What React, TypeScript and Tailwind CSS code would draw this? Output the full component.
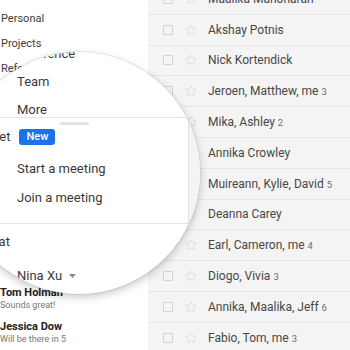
import React from 'react';
import { Star } from 'lucide-react';

interface Thread {
  names: string;
  count?: number;
}

const threads: Thread[] = [
  { names: 'Maalika Manoharan' },
  { names: 'Akshay Potnis' },
  { names: 'Nick Kortendick' },
  { names: 'Jeroen, Matthew, me', count: 3 },
  { names: 'Mika, Ashley', count: 2 },
  { names: 'Annika Crowley' },
  { names: 'Muireann, Kylie, David', count: 5 },
  { names: 'Deanna Carey' },
  { names: 'Earl, Cameron, me', count: 4 },
  { names: 'Diogo, Vivia', count: 3 },
  { names: 'Annika, Maalika, Jeff', count: 6 },
  { names: 'Fabio, Tom, me', count: 3 },
];

const chats = [
  { name: 'Tom Holman', preview: 'Sounds great!' },
  { name: 'Jessica Dow', preview: 'Will be there in 5' },
];

const ThreadRow: React.FC<{ thread: Thread }> = ({ thread }) => (
  <div className="h-[30.8px] flex items-center pl-[15px] border-b border-[#e6e6e6]">
    <div className="w-[10px] h-[10px] border border-[#d2d2d2] rounded-[1px]" />
    <Star className="ml-[12px] w-[12px] h-[12px] text-[#d4d4d4]" strokeWidth={1.5} />
    <span className="ml-[11px] text-[12px] text-[#474747] whitespace-nowrap">
      {thread.names}
      {thread.count && <span className="ml-[3px] text-[9.5px] text-[#6f6f6f]">{thread.count}</span>}
    </span>
  </div>
);

const Magnifier: React.FC = () => (
  <div className="absolute left-[-42px] top-[52px] w-[242px] h-[242px] rounded-full overflow-hidden bg-white shadow-[0_0_0_1px_rgba(0,0,0,0.06),0_3px_8px_rgba(0,0,0,0.22)]">
    {/* content laid out in page coordinates */}
    <div className="ml-[42px] mt-[-52px] w-[350px] h-[350px] flex text-[13px] text-[#3a3a3a]">
      <div className="w-[188px] pt-[40px]">
        <div className="h-[77px] overflow-hidden">
          {['Reference', 'Team', 'More'].map((label) => (
            <div key={label} className="h-[28px] flex items-center pl-[17px]">
              {label}
            </div>
          ))}
        </div>

        {/* Meet panel */}
        <div className="border-t border-[#e4e4e4]">
          <div className="ml-[60px] mt-[4px] w-[29px] h-[3px] rounded-full bg-[#e3e3e3]" />
          <div className="mt-[3px] h-[18px] flex items-center gap-[9px] ml-[-19px]">
            <span>Meet</span>
            <span className="w-[36px] h-[16px] rounded-[3px] bg-[#1a73e8] text-white text-[11px] font-medium flex items-center justify-center">
              New
            </span>
          </div>
          <div className="mt-[8px] h-[29px] flex items-center pl-[17px]">Start a meeting</div>
          <div className="h-[29px] flex items-center pl-[17px]">Join a meeting</div>
        </div>

        {/* Chat panel */}
        <div className="mt-[11px] border-t border-[#e4e4e4]">
          <div className="mt-[8px] h-[20px] flex items-center ml-[-17px]">Chat</div>
          <div className="mt-[14px] h-[20px] flex items-center pl-[17px] gap-[7px]">
            <span>Nina Xu</span>
            <svg width="7" height="4" viewBox="0 0 7 4">
              <path d="M0 0h7L3.5 4z" fill="#8a8a8a" />
            </svg>
          </div>
        </div>
      </div>
      <div className="flex-1 bg-[#f4f4f4] border-l border-[#e2e2e2]" />
    </div>
  </div>
);

export default function App() {
  return (
    <div className="relative w-[350px] h-[350px] overflow-hidden bg-white font-['Roboto',sans-serif]">
      <div className="flex h-full">
        <aside className="w-[148px] shrink-0 flex flex-col">
          <div className="pt-[7px] text-[11px] text-[#3c3c3c]">
            {['Personal', 'Projects', 'Reference'].map((label) => (
              <div key={label} className="h-[25px] flex items-center pl-[1px]">
                {label}
              </div>
            ))}
          </div>
          <div className="mt-[203px] flex flex-col gap-[7px]">
            {chats.map((c) => (
              <div key={c.name} className="leading-none">
                <div className="h-[14px] flex items-center text-[11px] font-bold text-[#222]">{c.name}</div>
                <div className="h-[13px] flex items-center text-[9px] text-[#777]">{c.preview}</div>
              </div>
            ))}
          </div>
        </aside>
        <main className="flex-1 bg-[#f4f4f4]">
          <div className="-mt-[16px]">
            {threads.map((t, i) => (
              <ThreadRow key={i} thread={t} />
            ))}
          </div>
        </main>
      </div>
      <Magnifier />
    </div>
  );
}
